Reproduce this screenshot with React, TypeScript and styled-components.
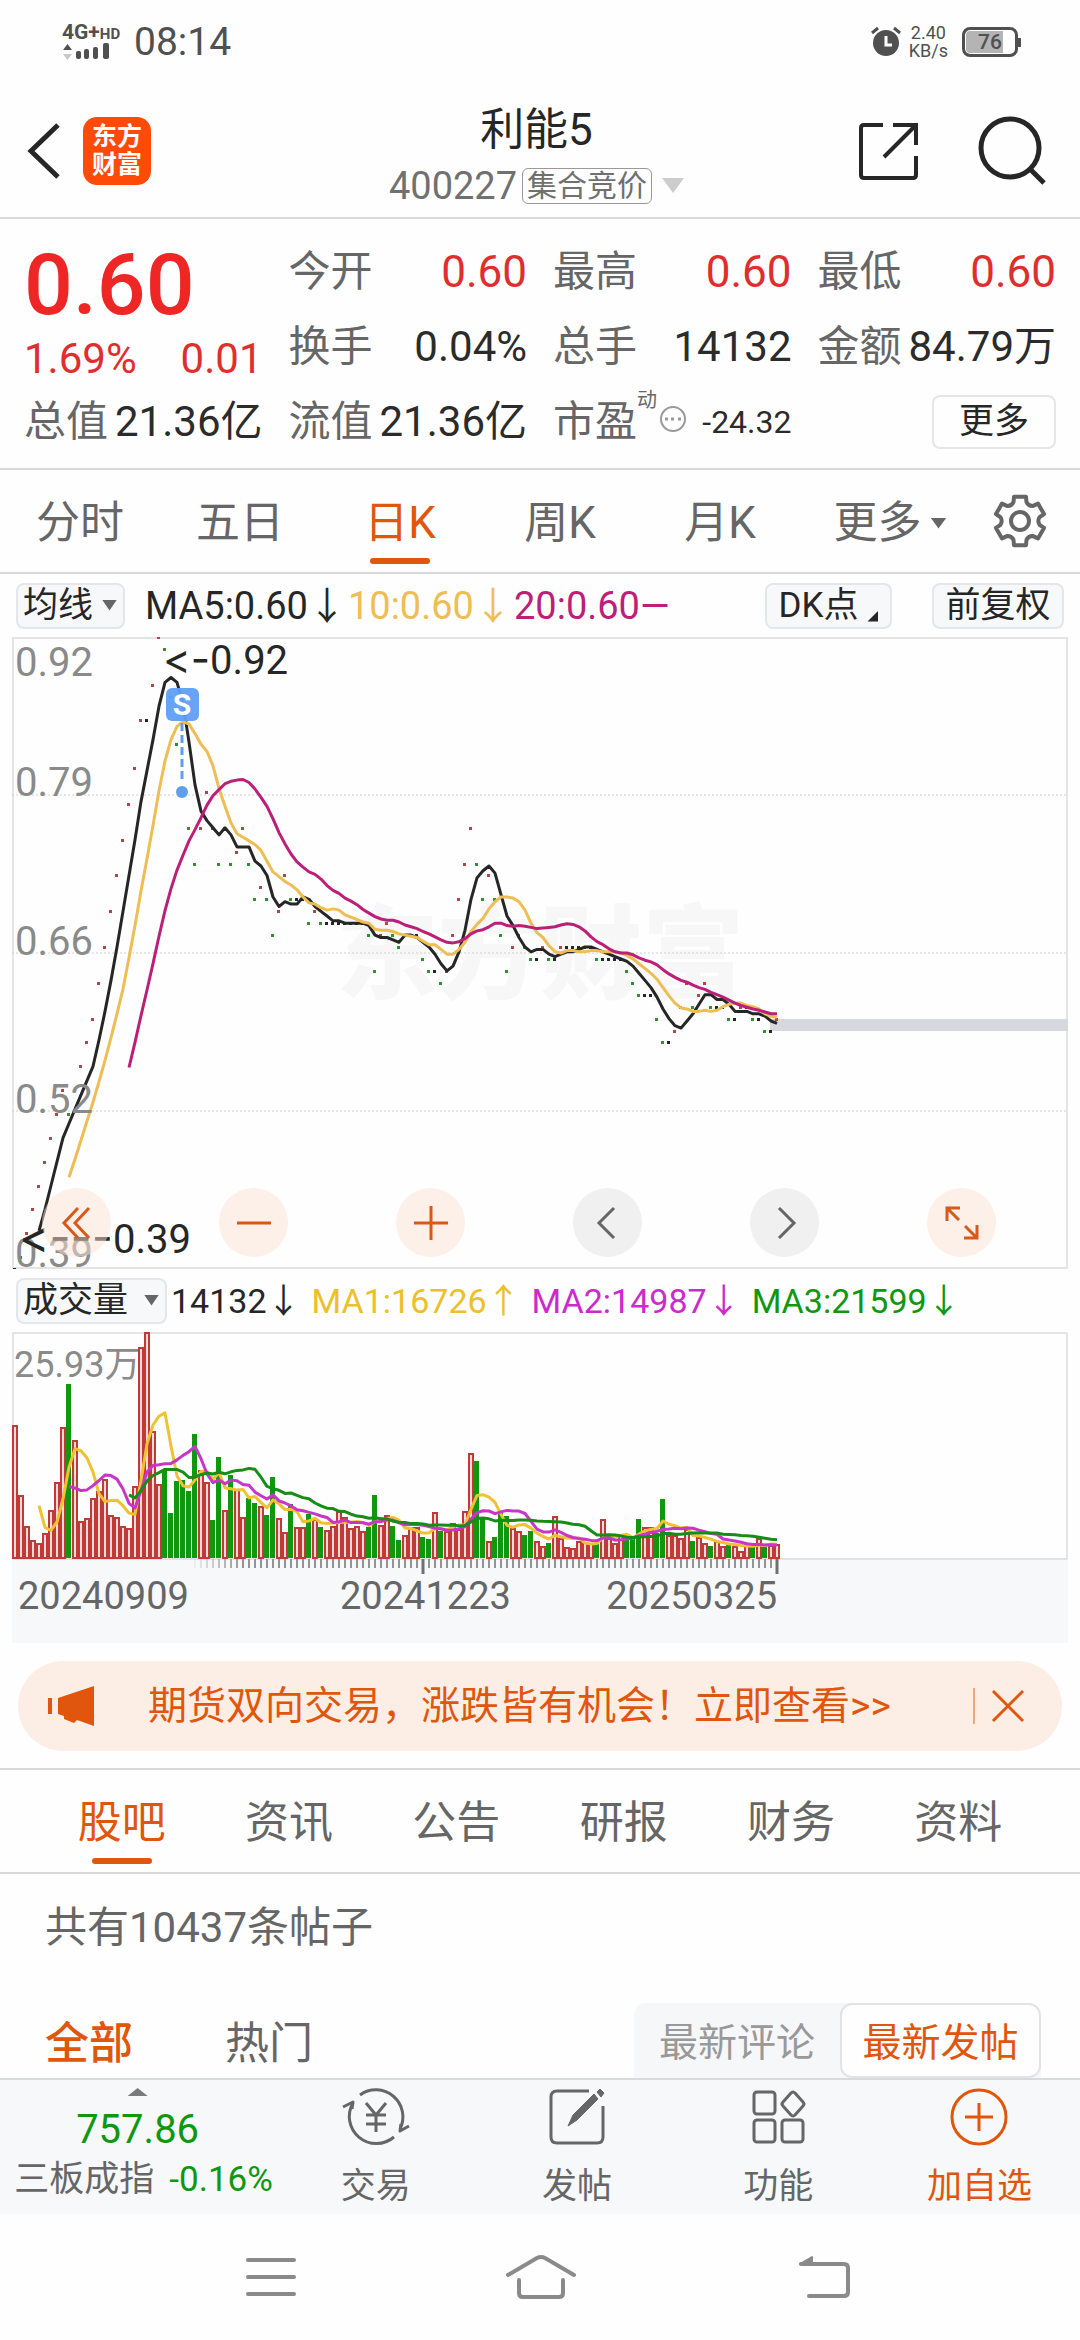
import React, { useState } from "react";
import styled, { createGlobalStyle, css } from "styled-components";

const GlobalStyle = createGlobalStyle`
  *, *::before, *::after { box-sizing: border-box; }
  body {
    margin: 0;
    background: #fefefe;
    color: #262626;
    font-family: Roboto, "Noto Sans CJK SC", sans-serif;
  }
  button, select {
    margin: 0;
    padding: 0;
    border: 0;
    background: none;
    color: inherit;
    font: inherit;
    cursor: pointer;
  }
  a { color: inherit; text-decoration: none; }
  h1, p, dl, dd, dt { margin: 0; font-weight: 400; }
  svg { display: block; }
`;

const ORANGE = "#e0560c";
const RED = "#df2e2e";
const GREEN = "#0f970f";
const GREY = "#666666";
const LINE = "#d9d9d9";

/* ---------- market data ---------- */

const CLOSES = [
  39, 40, 42, 44, 46, 48, 50, 52, 54, 52, 54, 56, 58, 60, 63, 66, 69, 72, 75, 78,
  81, 85, 85, 88, 92, 91, 87, 83, 79, 76, 73, 76, 79, 76, 73, 76, 73, 74, 76, 73,
  70, 71, 70, 67, 69, 72, 70, 70, 70, 68, 69, 68, 68, 68, 68, 68, 68, 68, 68, 67,
  64, 67, 68, 67, 66, 67, 67, 67, 65, 64, 64, 63, 64, 67, 70, 73, 76, 73, 70, 72,
  70, 67, 64, 66, 67, 66, 65, 65, 66, 65, 65, 66, 66, 66, 66, 66, 66, 65, 65, 65,
  65, 65, 64, 63, 62, 62, 62, 60, 58, 58, 59, 61, 63, 61, 62, 63, 61, 61, 61, 60,
  60, 61, 61, 60, 60, 59, 59, 60,
];

/* Negative values are days that closed lower. */
const VOLUMES = [
  399, 189, 96, 53, 45, 74, 144, 226, 393, -521, 352, 111, 119, 180, 199, 235, 129, 122, 97, 89,
  214, 631, 676, 379, 220, -264, -134, -230, -233, -200, -371, 262, 227, -115, -303, 143, -248, 206, 124, -178,
  -164, 156, -129, -242, 119, 78, -162, 92, 92, -131, 117, -94, 84, 96, 141, 124, 89, 96, 80, -94,
  -189, 99, 129, -96, -54, 69, 94, 94, -62, -56, 139, -82, 82, 106, 86, 141, 313, -290, -116, 50,
  -62, -134, -126, 89, 82, -69, -81, 52, 37, -44, 126, 59, 33, 30, 52, 49, 44, -42, 118, 59,
  46, 73, -59, -64, -117, 92, 94, -74, -176, 69, 69, 59, 87, -52, 64, 44, -36, 52, 36, -42,
  36, 22, 42, -34, 59, -34, 39, 41,
];

const CHART_W = 1056;
const PRICE_H = 632;
const VOLUME_H = 226;
const AXIS_H = 85;

const dayX = (i: number) => 3 + i * 6;
const priceY = (p: number) => ((92 - p) / 53) * PRICE_H;
const volumeY = (v: number) => VOLUME_H - (v / 676) * VOLUME_H;

function averageLine(values: number[], days: number, toY: (v: number) => number) {
  const points: string[] = [];
  for (let i = days - 1; i < values.length; i += 1) {
    let sum = 0;
    for (let k = i - days + 1; k <= i; k += 1) sum += Math.abs(values[k]);
    points.push(`${dayX(i)},${toY(sum / days).toFixed(1)}`);
  }
  return points.join(" ");
}

/* ---------- status bar ---------- */

const Page = styled.div`
  display: flex;
  flex-direction: column;
  width: 100%;
`;

const StatusBar = styled.div`
  display: flex;
  align-items: center;
  justify-content: space-between;
  height: 84px;
  padding: 0 62px;
  color: #505050;
`;

const StatusGroup = styled.div<{ $gap: number }>`
  display: flex;
  align-items: center;
  gap: ${(p) => p.$gap}px;
`;

const Network = styled.div`
  display: flex;
  flex-direction: column;
  gap: 1px;
  width: 60px;
  font-size: 21px;
  line-height: 16px;
  font-weight: 700;
  white-space: nowrap;
  small { font-size: 15px; }
`;

const Clock = styled.span`
  font-size: 39px;
  line-height: 44px;
`;

const Speed = styled.span`
  display: flex;
  flex-direction: column;
  align-items: center;
  font-size: 18px;
  line-height: 18px;
`;

const Battery = styled.span`
  position: relative;
  display: flex;
  align-items: center;
  justify-content: center;
  width: 56px;
  height: 30px;
  margin-left: 6px;
  border: 3px solid #505050;
  border-radius: 8px;
  background: linear-gradient(90deg, #b4b4b4 76%, #ffffff 76%);
  box-shadow: inset 0 0 0 1px #ffffff;
  font-size: 21px;
  line-height: 24px;
  font-weight: 500;
  &::after {
    content: "";
    position: absolute;
    right: -6px;
    width: 3px;
    height: 9px;
    background: #505050;
  }
`;

/* ---------- header ---------- */

const Header = styled.header`
  display: grid;
  grid-template-columns: 1fr auto 1fr;
  align-items: center;
  height: 135px;
  padding: 0 32px 0 25px;
  border-bottom: 2px solid ${LINE};
`;

const HeaderSide = styled.div<{ $end?: boolean }>`
  display: flex;
  align-items: center;
  gap: ${(p) => (p.$end ? 56 : 20)}px;
  justify-content: ${(p) => (p.$end ? "flex-end" : "flex-start")};
`;

const Logo = styled.a`
  display: grid;
  place-content: center;
  width: 68px;
  height: 68px;
  border-radius: 14px;
  background: #ff4a08;
  color: #ffffff;
  font-size: 25px;
  line-height: 28px;
  font-weight: 700;
`;

const TitleBlock = styled.div`
  display: flex;
  flex-direction: column;
  align-items: center;
  gap: 4px;
  padding-top: 10px;
`;

const Title = styled.h1`
  font-size: 44px;
  line-height: 56px;
`;

const Subtitle = styled.p`
  display: flex;
  align-items: center;
  gap: 5px;
  color: #707070;
  font-size: 38px;
  line-height: 48px;
`;

const Tag = styled.span`
  padding: 0 4px;
  border: 1px solid #999999;
  border-radius: 6px;
  font-size: 30px;
  line-height: 34px;
`;

const Triangle = styled.span<{ $size: number; $color: string; $up?: boolean }>`
  width: ${(p) => p.$size}px;
  height: ${(p) => Math.round(p.$size * (p.$up ? 0.4 : 0.7))}px;
  background: ${(p) => p.$color};
  clip-path: ${(p) =>
    p.$up ? "polygon(50% 0, 100% 100%, 0 100%)" : "polygon(0 0, 100% 0, 50% 100%)"};
`;

const TagTriangle = styled(Triangle)`
  margin-left: 5px;
`;

/* ---------- quote ---------- */

const Quote = styled.section`
  display: grid;
  grid-template-columns: repeat(4, 1fr);
  grid-auto-rows: 75px;
  column-gap: 26px;
  padding: 15px 24px 9px;
  border-bottom: 2px solid ${LINE};
`;

const LastPrice = styled.div`
  grid-row: span 2;
  color: ${RED};
`;

const BigPrice = styled.p`
  color: #ee2626;
  font-size: 86px;
  line-height: 102px;
  font-weight: 500;
`;

const Change = styled.p`
  display: flex;
  justify-content: space-between;
  font-size: 42px;
  line-height: 46px;
`;

const Stat = styled.dl`
  display: flex;
  align-items: center;
  justify-content: space-between;
  min-width: 0;
  font-size: 42px;
  line-height: 48px;
  white-space: nowrap;
  dt {
    display: flex;
    align-items: center;
    color: ${GREY};
  }
`;

const StatValue = styled.dd<{ $up?: boolean; $small?: boolean }>`
  color: ${(p) => (p.$up ? RED : "#2b2b2b")};
  font-size: ${(p) => (p.$small ? 32 : p.$up ? 44 : 42)}px;
`;

const Superscript = styled.sup`
  align-self: flex-start;
  margin-top: -8px;
  font-size: 20px;
  line-height: 20px;
`;

const MoreButton = styled.button`
  align-self: center;
  justify-self: end;
  width: 124px;
  height: 54px;
  border: 2px solid #e6e6e6;
  border-radius: 8px;
  font-size: 35px;
  line-height: 48px;
`;

/* ---------- tabs ---------- */

const PeriodTabs = styled.nav`
  display: grid;
  grid-template-columns: repeat(5, 8fr) 9fr 4fr;
  align-items: stretch;
  height: 104px;
  padding-right: 20px;
  border-bottom: 2px solid ${LINE};
`;

const SectionTabs = styled.nav`
  display: grid;
  grid-template-columns: repeat(6, 1fr);
  height: 106px;
  padding: 0 38px;
  border-top: 2px solid ${LINE};
  border-bottom: 2px solid ${LINE};
`;

const Tab = styled.button<{ $active?: boolean }>`
  position: relative;
  display: flex;
  align-items: center;
  justify-content: center;
  gap: 9px;
  padding-top: 4px;
  color: ${GREY};
  font-size: 44px;
  line-height: 52px;
  ${(p) =>
    p.$active &&
    css`
      color: ${ORANGE};
      &::after {
        content: "";
        position: absolute;
        bottom: 8px;
        left: calc(50% - 30px);
        width: 60px;
        height: 6px;
        border-radius: 3px;
        background: ${ORANGE};
      }
    `}
`;

const SettingsTab = styled(Tab)`
  padding-top: 0;
`;

/* ---------- chart toolbars ---------- */

const ChartBar = styled.div`
  display: flex;
  align-items: center;
  height: 63px;
  padding: 0 16px;
`;

const chip = css`
  height: 46px;
  border: 2px solid #e4e6ea;
  border-radius: 8px;
  background: #f7f8fa;
  color: #262626;
  font-size: 35px;
  line-height: 42px;
`;

const Picker = styled.label<{ $width: number }>`
  position: relative;
  display: block;
  flex: none;
  width: ${(p) => p.$width}px;
  select {
    ${chip}
    appearance: none;
    width: 100%;
    padding-left: 5px;
  }
  span {
    position: absolute;
    right: 8px;
    top: 17px;
    pointer-events: none;
  }
`;

const ChipButton = styled.button<{ $width: number }>`
  ${chip}
  display: flex;
  align-items: center;
  justify-content: center;
  gap: 9px;
  width: ${(p) => p.$width}px;
`;

const Corner = styled.span`
  align-self: flex-end;
  width: 11px;
  height: 11px;
  margin-bottom: 5px;
  background: #262626;
  clip-path: polygon(100% 0, 100% 100%, 0 100%);
`;

const Indicators = styled.div<{ $small?: boolean }>`
  display: flex;
  align-items: center;
  gap: ${(p) => (p.$small ? 11 : 2)}px;
  padding-left: ${(p) => (p.$small ? 4 : 20)}px;
  font-size: ${(p) => (p.$small ? 34 : 38)}px;
  line-height: 46px;
  white-space: nowrap;
`;

const Indicator = styled.span<{ $color: string }>`
  color: ${(p) => p.$color};
`;

const ChipGroup = styled.div`
  display: flex;
  gap: 40px;
  margin-left: auto;
`;

/* ---------- charts ---------- */

const ChartArea = styled.div`
  position: relative;
  margin: 0 12px;
  svg.plot { width: 100%; height: auto; }
`;

const ArrowSpan = styled.tspan<{ $size: number }>`
  font-family: Inter, sans-serif;
  font-size: ${(p) => p.$size}px;
  font-variant-ligatures: none;
  font-feature-settings: "calt" 0;
`;

const ChartControls = styled.div`
  position: absolute;
  right: 72px;
  bottom: 12px;
  left: 30px;
  display: flex;
  justify-content: space-between;
`;

const RoundButton = styled.button<{ $muted?: boolean }>`
  display: grid;
  place-items: center;
  width: 69px;
  height: 69px;
  border-radius: 50%;
  background: ${(p) => (p.$muted ? "rgba(120,120,120,0.1)" : "rgba(252,226,210,0.5)")};
  color: ${(p) => (p.$muted ? "#666666" : "#d9591a")};
`;

/* ---------- banner ---------- */

const Banner = styled.aside`
  display: flex;
  align-items: center;
  height: 90px;
  margin: 18px 18px 17px;
  padding: 0 37px 0 29px;
  border-radius: 45px;
  background: #fceee5;
  color: ${ORANGE};
`;

const BannerLink = styled.a`
  flex: 1;
  padding-left: 53px;
  font-size: 39px;
  line-height: 50px;
  white-space: nowrap;
`;

const BannerClose = styled.button`
  display: flex;
  align-items: center;
  height: 36px;
  padding-left: 16px;
  border-left: 2px solid #e9a884;
`;

/* ---------- posts ---------- */

const Feed = styled.section`
  padding: 30px 39px 0 45px;
  color: ${GREY};
`;

const PostCount = styled.p`
  font-size: 42px;
  line-height: 48px;
`;

const FilterRow = styled.div`
  display: flex;
  align-items: stretch;
  justify-content: space-between;
  height: 75px;
  margin-top: 51px;
`;

const FilterGroup = styled.div`
  display: flex;
  gap: 92px;
`;

const Filter = styled.button<{ $active?: boolean }>`
  padding-top: 6px;
  color: ${(p) => (p.$active ? ORANGE : GREY)};
  font-size: 44px;
  line-height: 52px;
  font-weight: ${(p) => (p.$active ? 500 : 400)};
`;

const Segmented = styled.div`
  display: flex;
  border-radius: 12px 12px 0 0;
  background: #f6f7f9;
`;

const Segment = styled.button<{ $active?: boolean }>`
  width: ${(p) => (p.$active ? 201 : 206)}px;
  padding-top: 5px;
  border: 2px solid ${(p) => (p.$active ? "#e2e3e5" : "transparent")};
  border-radius: 12px;
  background: ${(p) => (p.$active ? "#fefefe" : "transparent")};
  color: ${(p) => (p.$active ? ORANGE : "#999999")};
  font-size: 39px;
  line-height: 48px;
`;

/* ---------- bottom bars ---------- */

const ActionBar = styled.nav`
  display: grid;
  grid-template-columns: 275fr repeat(4, 201fr);
  height: 136px;
  border-top: 2px solid #d7dade;
  background: #f6f8fa;
  color: ${GREY};
`;

const IndexQuote = styled.a`
  display: flex;
  flex-direction: column;
  align-items: center;
  padding-top: 8px;
`;

const IndexValue = styled.span`
  margin-top: 9px;
  color: ${GREEN};
  font-size: 40px;
  line-height: 50px;
`;

const IndexName = styled.span`
  display: flex;
  gap: 15px;
  padding-left: 12px;
  font-size: 35px;
  line-height: 50px;
  white-space: nowrap;
`;

const IndexChange = styled.span`
  color: ${GREEN};
`;

const Action = styled.button<{ $accent?: boolean }>`
  display: flex;
  flex-direction: column;
  align-items: center;
  gap: 15px;
  padding-top: 6px;
  color: ${(p) => (p.$accent ? ORANGE : GREY)};
  font-size: 35px;
  line-height: 48px;
`;

const SystemBar = styled.nav`
  display: grid;
  grid-template-columns: 270fr 270fr 296fr;
  place-items: center;
  height: 126px;
  padding: 0 108px 0 136px;
  color: #8a8a8a;
`;

/* ---------- icons ---------- */

type IconProps = { w: number; h: number; sw?: number; color?: string; children: React.ReactNode };

function Icon({ w, h, sw = 4, color = "currentColor", children }: IconProps) {
  return (
    <svg
      width={w}
      height={h}
      viewBox={`0 0 ${w} ${h}`}
      fill="none"
      stroke={color}
      strokeWidth={sw}
      strokeLinejoin="round"
      aria-hidden="true"
    >
      {children}
    </svg>
  );
}

function gearOutline() {
  const at = (deg: number, r: number) => {
    const a = (deg * Math.PI) / 180;
    return `${(28 + r * Math.cos(a)).toFixed(1)} ${(28 + r * Math.sin(a)).toFixed(1)}`;
  };
  let d = "";
  for (let k = 0; k < 6; k += 1) {
    const c = k * 60 - 90;
    d += `${k ? "L" : "M"}${at(c - 14, 25)}L${at(c + 14, 25)}L${at(c + 19, 20)}Q${at(c + 30, 17)} ${at(c + 41, 20)}`;
  }
  return `${d}Z`;
}

function GearIcon() {
  return (
    <Icon w={56} h={56}>
      <path d={gearOutline()} />
      <circle cx="28" cy="28" r="9" />
    </Icon>
  );
}

/* ---------- chart views ---------- */

function PriceChart() {
  const labels: [string, number][] = [
    ["0.92", 39],
    ["0.79", 159],
    ["0.66", 318],
    ["0.52", 476],
    ["0.39", 630],
  ];
  return (
    <svg className="plot" viewBox={`0 0 ${CHART_W} ${PRICE_H}`} role="img" aria-label="日K">
      <rect x="1" y="1" width={CHART_W - 2} height={PRICE_H - 2} fill="none" stroke="#e4e4e4" strokeWidth="2" />
      <text
        x={CHART_W / 2}
        y="354"
        textAnchor="middle"
        fontFamily="'Noto Sans CJK SC', sans-serif"
        fontWeight="900"
        fontSize="102"
        fill="#f7f7f7"
      >
        东方财富
      </text>
      {[158, 316, 474].map((y) => (
        <line key={y} x1="0" x2={CHART_W} y1={y} y2={y} stroke="#d0d0d0" strokeWidth="1" strokeDasharray="2 2" />
      ))}
      <rect x="758" y="382" width="298" height="12" fill="#d5d8dd" />
      {CLOSES.map((p, i) => {
        const prev = i ? CLOSES[i - 1] : p;
        const fill = p > prev ? "#b04744" : p < prev ? "#2d942d" : "#262626";
        return <rect key={i} x={dayX(i) - 2} y={Math.round(priceY(p)) - 1} width="3" height="3" fill={fill} />;
      })}
      <g fill="none" strokeWidth="3" strokeLinejoin="round">
        <polyline points={averageLine(CLOSES, 5, priceY)} stroke="#262626" />
        <polyline points={averageLine(CLOSES, 10, priceY)} stroke="#efbd55" />
        <polyline points={averageLine(CLOSES, 20, priceY)} stroke="#bb1f78" />
      </g>
      <line x1="170" x2="170" y1="86" y2="146" stroke="#5f9fe8" strokeWidth="3" strokeDasharray="8 4" />
      <circle cx="170" cy="155" r="6" fill="#5f9fe8" />
      <rect x="154" y="51" width="33" height="33" rx="6" fill="#5f9ff8" fillOpacity="0.95" />
      <text x="170" y="78" textAnchor="middle" fontSize="30" fontWeight="700" fill="#ffffff">
        S
      </text>
      <g fontSize="40" fill="#8a8a8a">
        {labels.map(([label, y]) => (
          <text key={label} x="3" y={y}>
            {label}
          </text>
        ))}
      </g>
      <g fontSize="40" fill="#262626">
        <text x="151" y="37">
          <ArrowSpan $size={42}>&lt;-</ArrowSpan>0.92
        </text>
        <text x="7" y="616">
          <ArrowSpan $size={46}>&lt;---</ArrowSpan>0.39
        </text>
      </g>
    </svg>
  );
}

function VolumeChart() {
  return (
    <svg className="plot" viewBox={`0 0 ${CHART_W} ${VOLUME_H + AXIS_H}`} role="img" aria-label="成交量">
      <rect x="0" y={VOLUME_H} width={CHART_W} height={AXIS_H} fill="#f7f8fa" />
      <rect x="1" y="1" width={CHART_W - 2} height={VOLUME_H} fill="none" stroke="#cccccc" strokeWidth="1" />
      {VOLUMES.map((v, i) => {
        const y = Math.round(volumeY(Math.abs(v)));
        const x = dayX(i);
        return v < 0 ? (
          <rect key={i} x={x - 3} y={y} width="5" height={VOLUME_H - y} fill={GREEN} />
        ) : (
          <rect
            key={i}
            x={x - 2}
            y={y + 1}
            width="4"
            height={VOLUME_H - y - 1}
            fill="#fbdada"
            stroke="#c23a38"
            strokeWidth="2"
          />
        );
      })}
      <g fill="none" strokeWidth="3" strokeLinejoin="round">
        <polyline points={averageLine(VOLUMES, 5, volumeY)} stroke="#f0c232" />
        <polyline points={averageLine(VOLUMES, 10, volumeY)} stroke="#c934c9" />
        <polyline points={averageLine(VOLUMES, 20, volumeY)} stroke="#178c17" />
      </g>
      {VOLUMES.map((_, i) => {
        if (i < 30) return null;
        const long = i === 68 || i === 127;
        return (
          <line
            key={i}
            x1={dayX(i)}
            x2={dayX(i)}
            y1={VOLUME_H + 1}
            y2={VOLUME_H + (long ? 16 : 10)}
            stroke={long ? "#707070" : "#949494"}
            strokeWidth={long ? 3 : 2}
            strokeOpacity={Math.min(1, (i - 29) / 9)}
          />
        );
      })}
      <text x="2" y="45" fontSize="36" fill="#8a8a8a">
        25.93万
      </text>
      <g fontSize="38" fill={GREY}>
        <text x="6" y="277">20240909</text>
        <text x="328" y="277">20241223</text>
        <text x="765" y="277" textAnchor="end">20250325</text>
      </g>
    </svg>
  );
}

/* ---------- page ---------- */

const STATS: { label: string; value: string; up?: boolean }[] = [
  { label: "今开", value: "0.60", up: true },
  { label: "最高", value: "0.60", up: true },
  { label: "最低", value: "0.60", up: true },
  { label: "换手", value: "0.04%" },
  { label: "总手", value: "14132" },
  { label: "金额", value: "84.79万" },
  { label: "总值", value: "21.36亿" },
  { label: "流值", value: "21.36亿" },
];

const PERIODS = ["分时", "五日", "日K", "周K", "月K"];
const SECTIONS = ["股吧", "资讯", "公告", "研报", "财务", "资料"];

export default function App() {
  const [period, setPeriod] = useState("日K");
  const [section, setSection] = useState("股吧");

  return (
    <Page>
      <GlobalStyle />

      <StatusBar>
        <StatusGroup $gap={12}>
          <Network>
            <span>
              4G+<small>HD</small>
            </span>
            <svg width="50" height="18" viewBox="0 0 50 18" fill="#505050" aria-hidden="true">
              <path d="M1 7 5.500 1 10 7Z" />
              <path d="M1 11 5.500 17 10 11Z" fill="#c8c8c8" />
              <rect x="14" y="8" width="5" height="8" rx="2" />
              <rect x="22" y="6" width="5" height="10" rx="2" />
              <rect x="31" y="4" width="5" height="12" rx="2" />
              <rect x="41" y="0" width="6" height="16" rx="2" />
            </svg>
          </Network>
          <Clock>08:14</Clock>
        </StatusGroup>
        <StatusGroup $gap={8}>
          <svg width="30" height="32" viewBox="0 0 30 32" fill="none" stroke="#505050" aria-hidden="true">
            <circle cx="15" cy="17" r="13" fill="#505050" stroke="none" />
            <path d="M1 7 7 2M29 7 23 2" strokeWidth="3" />
            <path d="M15 10v9h6" stroke="#ffffff" strokeWidth="3" />
          </svg>
          <Speed>
            <span>2.40</span>
            <span>KB/s</span>
          </Speed>
          <Battery>76</Battery>
        </StatusGroup>
      </StatusBar>

      <Header>
        <HeaderSide>
          <button aria-label="返回">
            <Icon w={38} h={58} sw={5}>
              <path d="M33 3 6 29 33 55" strokeLinejoin="miter" />
            </Icon>
          </button>
          <Logo href="#home">
            <span>东方</span>
            <span>财富</span>
          </Logo>
        </HeaderSide>
        <TitleBlock>
          <Title>利能5</Title>
          <Subtitle>
            400227
            <Tag>集合竞价</Tag>
            <TagTriangle $size={22} $color="#cccccc" />
          </Subtitle>
        </TitleBlock>
        <HeaderSide $end>
          <button aria-label="分享">
            <Icon w={64} h={62}>
              <path d="M27 5H8Q5 5 5 8V55Q5 58 8 58H57Q60 58 60 55V36" />
              <path d="M37 5H60V25M60 5 28 37" strokeLinejoin="miter" />
            </Icon>
          </button>
          <button aria-label="搜索">
            <Icon w={72} h={72} sw={5}>
              <circle cx="34" cy="33" r="29" />
              <path d="M54 54 68 68" />
            </Icon>
          </button>
        </HeaderSide>
      </Header>

      <Quote>
        <LastPrice>
          <BigPrice>0.60</BigPrice>
          <Change>
            <span>1.69%</span>
            <span>0.01</span>
          </Change>
        </LastPrice>
        {STATS.map((s) => (
          <Stat key={s.label}>
            <dt>{s.label}</dt>
            <StatValue $up={s.up}>{s.value}</StatValue>
          </Stat>
        ))}
        <Stat>
          <dt>
            市盈
            <Superscript>动</Superscript>
            <Icon w={32} h={32} sw={2} color="#999999">
              <circle cx="16" cy="13" r="12" />
              <circle cx="16" cy="13" r="14" stroke="none" />
              <path d="M8 13h3M14 13h3M21 13h3" strokeWidth="3" />
            </Icon>
          </dt>
          <StatValue $small>-24.32</StatValue>
        </Stat>
        <MoreButton>更多</MoreButton>
      </Quote>

      <PeriodTabs>
        {PERIODS.map((p) => (
          <Tab key={p} $active={p === period} onClick={() => setPeriod(p)}>
            {p}
          </Tab>
        ))}
        <Tab>
          更多
          <Triangle $size={16} $color={GREY} />
        </Tab>
        <SettingsTab aria-label="设置">
          <GearIcon />
        </SettingsTab>
      </PeriodTabs>

      <ChartBar>
        <Picker $width={109}>
          <select aria-label="主图指标">
            <option>均线</option>
          </select>
          <Triangle $size={15} $color={GREY} />
        </Picker>
        <Indicators>
          <Indicator $color="#262626">MA5:0.60↓</Indicator>
          <Indicator $color="#efbd55">10:0.60↓</Indicator>
          <Indicator $color="#bb1f78">20:0.60—</Indicator>
        </Indicators>
        <ChipGroup>
          <ChipButton $width={127}>
            DK点
            <Corner />
          </ChipButton>
          <ChipButton $width={132}>前复权</ChipButton>
        </ChipGroup>
      </ChartBar>

      <ChartArea>
        <PriceChart />
        <ChartControls>
          <RoundButton aria-label="最早">
            <Icon w={32} h={36} sw={3}>
              <path d="M17 3 3 18 17 33M28 3 14 18 28 33" strokeLinejoin="miter" />
            </Icon>
          </RoundButton>
          <RoundButton aria-label="缩小">
            <Icon w={34} h={34} sw={3}>
              <path d="M0 17H34" />
            </Icon>
          </RoundButton>
          <RoundButton aria-label="放大">
            <Icon w={34} h={34} sw={3}>
              <path d="M0 17H34M17 0V34" />
            </Icon>
          </RoundButton>
          <RoundButton $muted aria-label="向左">
            <Icon w={24} h={36} sw={3}>
              <path d="M18 3 3 18 18 33" strokeLinejoin="miter" />
            </Icon>
          </RoundButton>
          <RoundButton $muted aria-label="向右">
            <Icon w={24} h={36} sw={3}>
              <path d="M6 3 21 18 6 33" strokeLinejoin="miter" />
            </Icon>
          </RoundButton>
          <RoundButton aria-label="全屏">
            <Icon w={36} h={36} sw={3}>
              <path d="M3 16V3H16M3 3 15 15M33 20V33H20M33 33 21 21" strokeLinejoin="miter" />
            </Icon>
          </RoundButton>
        </ChartControls>
      </ChartArea>

      <ChartBar>
        <Picker $width={151}>
          <select aria-label="副图指标">
            <option>成交量</option>
          </select>
          <Triangle $size={15} $color={GREY} />
        </Picker>
        <Indicators $small>
          <Indicator $color="#262626">14132↓</Indicator>
          <Indicator $color="#ecc02a">MA1:16726↑</Indicator>
          <Indicator $color="#cc2bcc">MA2:14987↓</Indicator>
          <Indicator $color={GREEN}>MA3:21599↓</Indicator>
        </Indicators>
      </ChartBar>

      <ChartArea>
        <VolumeChart />
      </ChartArea>

      <Banner>
        <svg width="48" height="42" viewBox="0 0 48 42" fill={ORANGE} aria-hidden="true">
          <rect x="1" y="13" width="4" height="16" />
          <path d="M11 13 47 1V41L30 35 27 38 17 34 17 31 11 29Z" />
        </svg>
        <BannerLink href="#futures">期货双向交易，涨跌皆有机会！立即查看&gt;&gt;</BannerLink>
        <BannerClose aria-label="关闭">
          <Icon w={34} h={34} sw={3}>
            <path d="M2 2 32 32M32 2 2 32" />
          </Icon>
        </BannerClose>
      </Banner>

      <SectionTabs>
        {SECTIONS.map((s) => (
          <Tab key={s} $active={s === section} onClick={() => setSection(s)}>
            {s}
          </Tab>
        ))}
      </SectionTabs>

      <Feed>
        <PostCount>共有10437条帖子</PostCount>
        <FilterRow>
          <FilterGroup>
            <Filter $active>全部</Filter>
            <Filter>热门</Filter>
          </FilterGroup>
          <Segmented>
            <Segment>最新评论</Segment>
            <Segment $active>最新发帖</Segment>
          </Segmented>
        </FilterRow>
      </Feed>

      <ActionBar>
        <IndexQuote href="#index">
          <Triangle $size={20} $color="#7a7a7a" $up />
          <IndexValue>757.86</IndexValue>
          <IndexName>
            三板成指
            <IndexChange>-0.16%</IndexChange>
          </IndexName>
        </IndexQuote>
        <Action>
          <Icon w={68} h={62} sw={3}>
            <path d="M18 9A27 27 0 0 1 58 43M11 17A27 27 0 0 0 52 51" />
            <path d="M1 21 11 16 10 23M67 40 58 45 59 38" />
            <path d="M24 17 34 29 44 17M34 29V46M24 29H44M24 38H44" />
          </Icon>
          交易
        </Action>
        <Action>
          <Icon w={60} h={62} sw={3}>
            <path d="M42 5H10Q4 5 4 11V51Q4 57 10 57H50Q56 57 56 51V20" />
            <path d="M21 40 26 29 47 8 51 13 30 34Z" fill="currentColor" strokeWidth="1" />
            <path d="M50 6 53 3 57 7 54 11Z" fill="currentColor" strokeWidth="1" />
          </Icon>
          发帖
        </Action>
        <Action>
          <Icon w={60} h={62} sw={3}>
            <rect x="6" y="6" width="21" height="22" rx="3" />
            <rect x="6" y="34" width="21" height="22" rx="3" />
            <rect x="34" y="34" width="21" height="22" rx="3" />
            <path d="M43 7Q45 5 47 7L55 16Q57 18 55 20L47 29Q45 31 43 29L35 20Q33 18 35 16Z" />
          </Icon>
          功能
        </Action>
        <Action $accent>
          <Icon w={60} h={62} sw={3}>
            <circle cx="30" cy="31" r="27" />
            <path d="M16 31H44M30 17V45" />
          </Icon>
          加自选
        </Action>
      </ActionBar>

      <SystemBar>
        <button aria-label="菜单">
          <Icon w={52} h={42}>
            <path d="M3 4H49M3 21H49M3 38H49" strokeLinecap="round" />
          </Icon>
        </button>
        <button aria-label="主页">
          <Icon w={72} h={46}>
            <path d="M3 21 32 4Q36 2 40 4L69 21M14 26V39Q14 43 18 43H54Q58 43 58 39V26" strokeLinecap="round" />
          </Icon>
        </button>
        <button aria-label="后退">
          <Icon w={54} h={46}>
            <path d="M4 10H47Q51 10 51 14V38Q51 42 47 42H12" strokeLinecap="round" />
            <path d="M3 10 15 3V10Z" fill="currentColor" strokeWidth="2" />
          </Icon>
        </button>
      </SystemBar>
    </Page>
  );
}
